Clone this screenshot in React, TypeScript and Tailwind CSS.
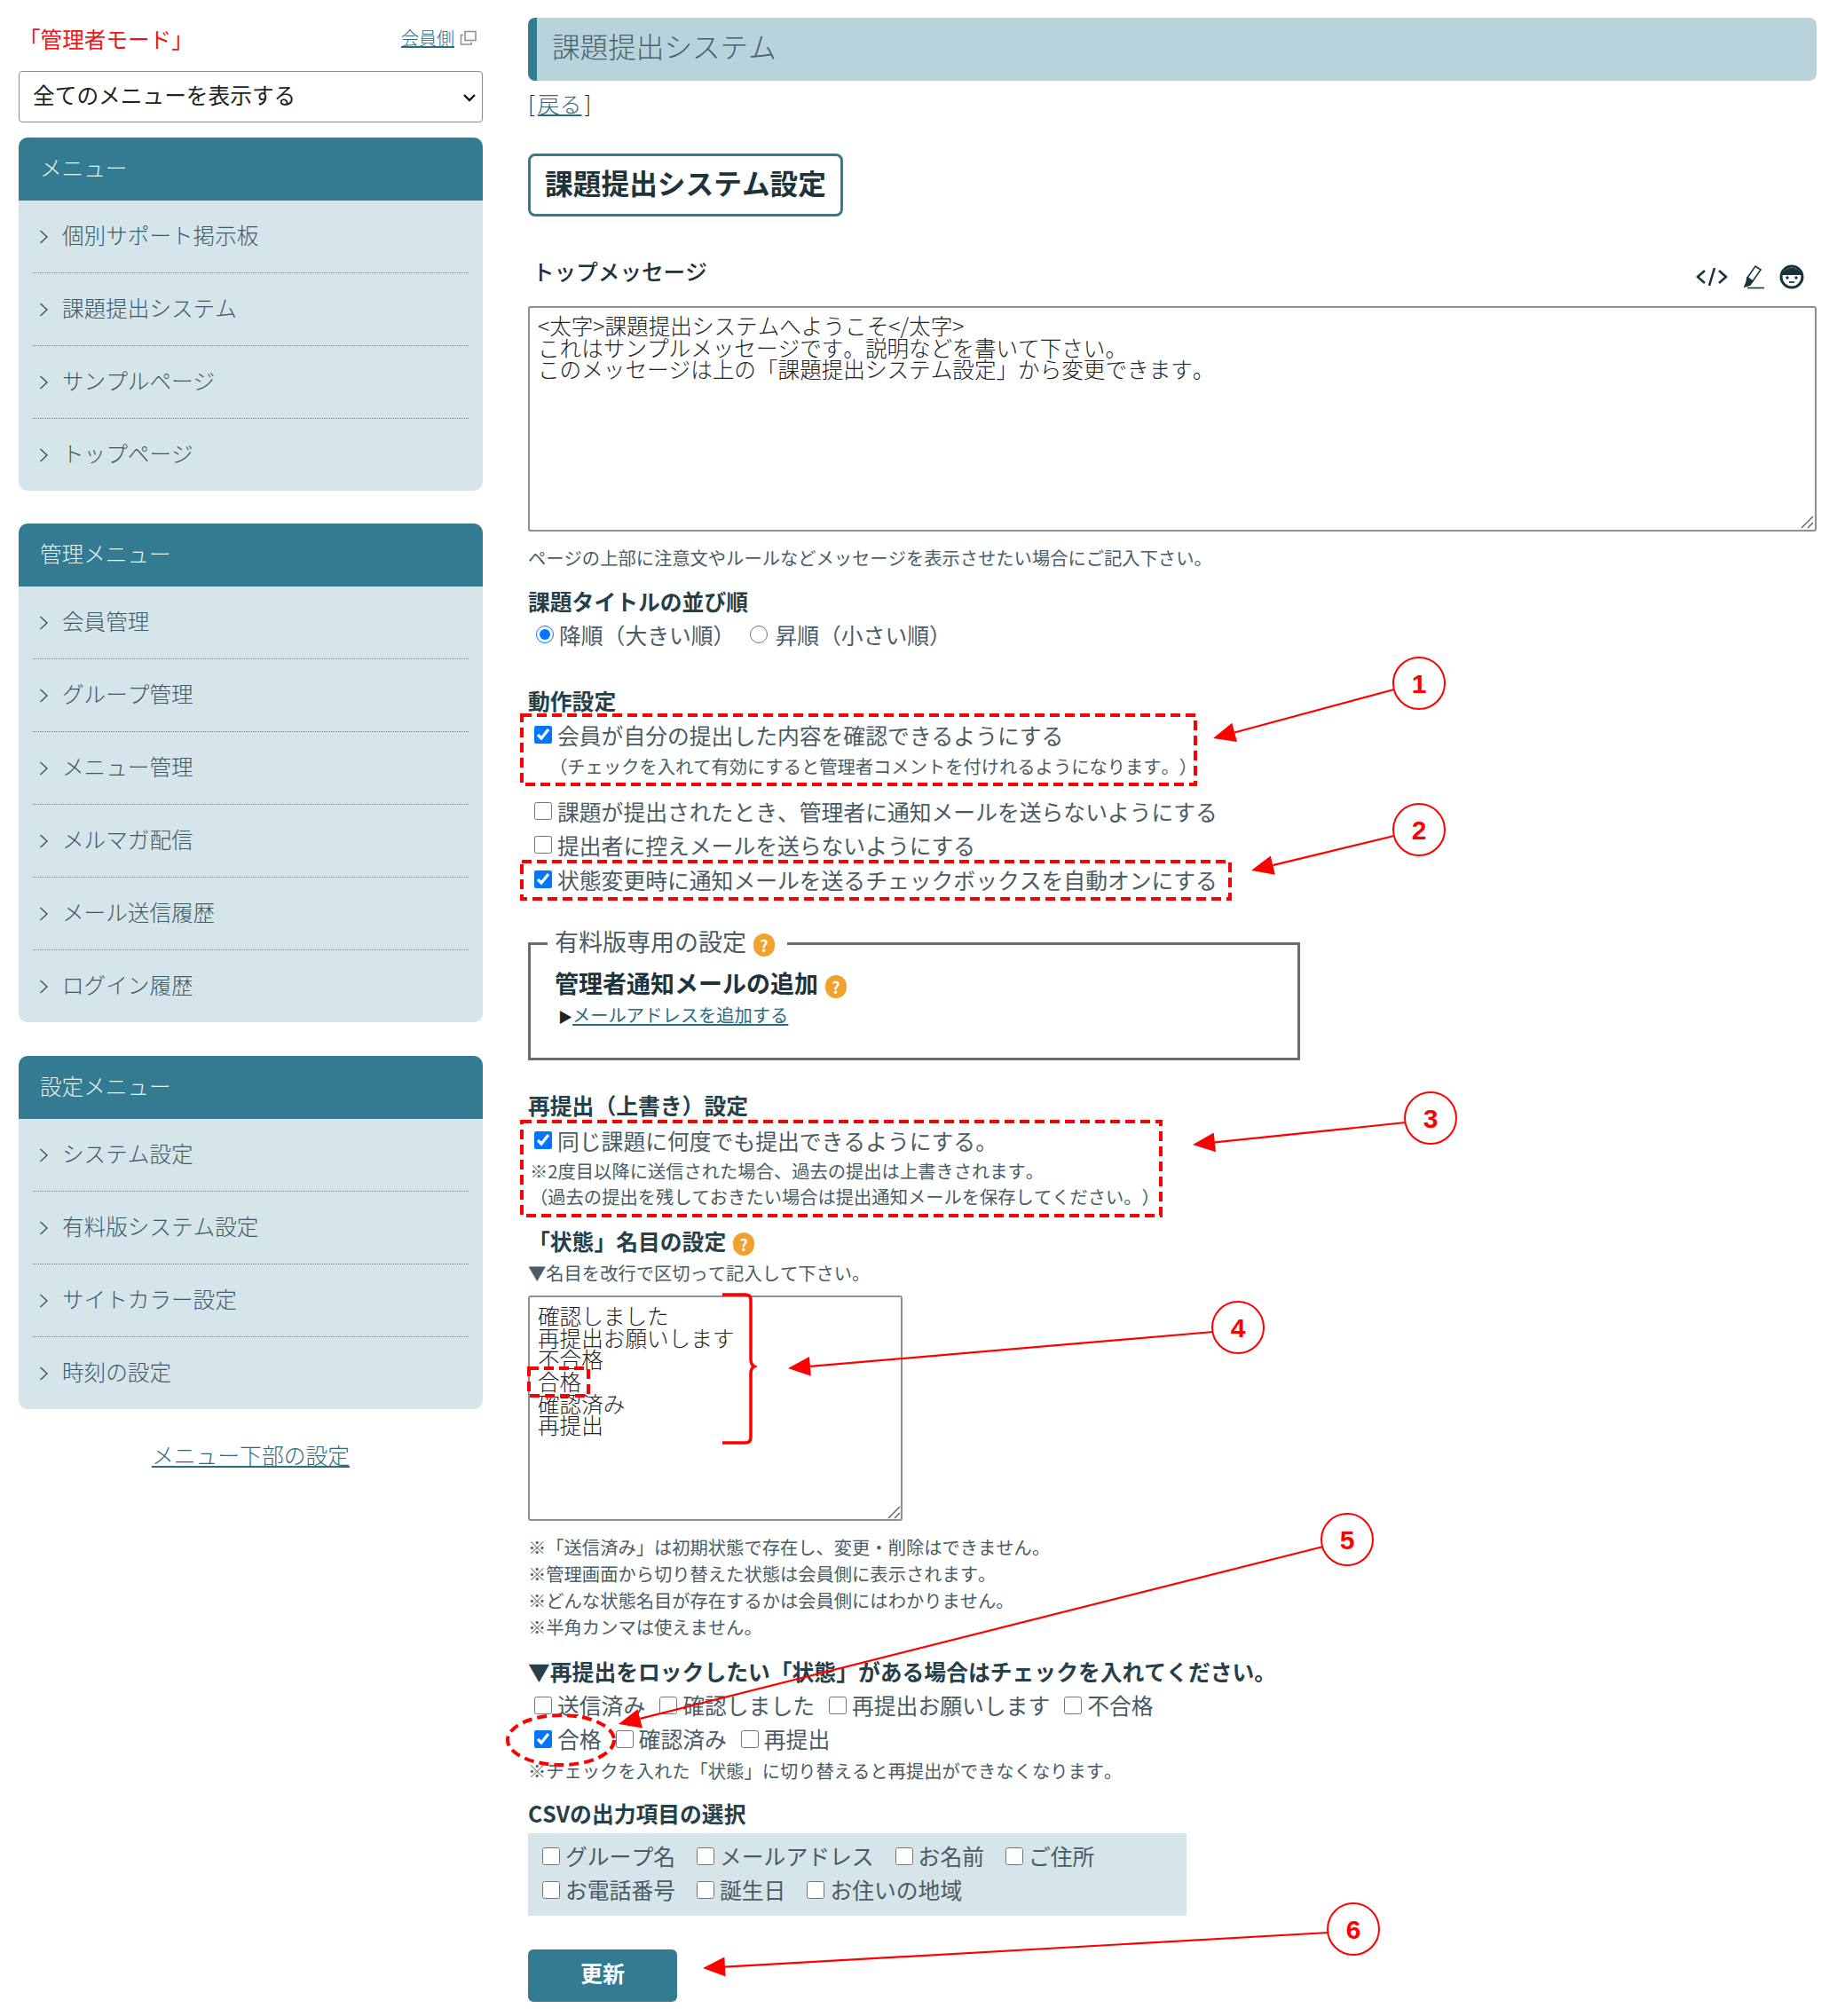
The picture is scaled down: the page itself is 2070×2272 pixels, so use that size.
const jp = '"Noto Sans CJK JP", "Noto Sans", sans-serif';

const menus = [
  { title: "メニュー", items: ["個別サポート掲示板", "課題提出システム", "サンプルページ", "トップページ"] },
  { title: "管理メニュー", items: ["会員管理", "グループ管理", "メニュー管理", "メルマガ配信", "メール送信履歴", "ログイン履歴"] },
  { title: "設定メニュー", items: ["システム設定", "有料版システム設定", "サイトカラー設定", "時刻の設定"] },
];

function MenuBox({ title, items }: { title: string; items: string[] }) {
  return (
    <div className="mb-[37px] even:mb-[38px]">
      <div className="h-[71px] rounded-t-[10px] bg-[#337b90] pl-[24px] text-[24.6px] font-light leading-[66px] text-[#e8f2f5]">{title}</div>
      <ul className="rounded-b-[10px] bg-[#d6e5ea] px-[16px]">
        {items.map((item, i) => (
          <li
            key={item}
            className={
              i < items.length - 1
                ? "flex h-[82px] items-center border-b border-dotted border-[#4f8a9c] pl-[7px] text-[#3b5b67]"
                : "flex h-[81px] items-center pl-[7px] text-[#3b5b67]"
            }
          >
            <svg width="11" height="18" viewBox="0 0 11 18" className="mr-[15px]">
              <path d="M1.5 2 L9 9 L1.5 16" fill="none" stroke="#3b5b67" strokeWidth="1.5" />
            </svg>
            <span className="pb-[5px] text-[24.6px] font-light">{item}</span>
          </li>
        ))}
      </ul>
    </div>
  );
}

function Help() {
  return (
    <span className="ml-[8px] inline-flex h-[26px] w-[24px] items-center justify-center rounded-full bg-[#f0a22e] align-middle text-[18px] font-bold leading-none text-white">
      ?
    </span>
  );
}

function Check({ label, checked = false, className = "" }: { label: string; checked?: boolean; className?: string }) {
  return (
    <label className={"inline-flex items-center pb-[3px] " + className}>
      <input type="checkbox" defaultChecked={checked} className="mr-[6px] h-[20px] w-[20px] shrink-0" />
      <span>{label}</span>
    </label>
  );
}

function Heading({ children, className = "" }: { children: React.ReactNode; className?: string }) {
  return <div className={"text-[24.8px] font-bold leading-[34px] text-[#26404a] " + className}>{children}</div>;
}

function Note({ children, className = "" }: { children: React.ReactNode; className?: string }) {
  return <div className={"text-[20.3px] leading-[30px] " + className}>{children}</div>;
}

function Arrow({ x1, y1, x2, y2 }: { x1: number; y1: number; x2: number; y2: number }) {
  // 矢じりは先端から線の向きに逆算して描く
  const len = Math.hypot(x2 - x1, y2 - y1);
  const ux = (x2 - x1) / len;
  const uy = (y2 - y1) / len;
  const bx = x2 - ux * 25;
  const by = y2 - uy * 25;
  const pts = `${x2},${y2} ${bx - uy * 11},${by + ux * 11} ${bx + uy * 11},${by - ux * 11}`;
  return (
    <g>
      <line x1={x1} y1={y1} x2={bx} y2={by} stroke="#f00" strokeWidth="2.2" />
      <polygon points={pts} fill="#f00" />
    </g>
  );
}

function Badge({ cx, cy, n }: { cx: number; cy: number; n: number }) {
  return (
    <g>
      <circle cx={cx} cy={cy} r="29" fill="#fff" stroke="#f00" strokeWidth="2" />
      <text x={cx} y={cy + 11} textAnchor="middle" fontSize="30" fontWeight="700" fill="#f00" fontFamily='"Liberation Sans", sans-serif'>
        {n}
      </text>
    </g>
  );
}

const dashed = { fill: "none", stroke: "#f00", strokeWidth: 4, strokeDasharray: "11 6" };

function Annotations() {
  return (
    <svg className="pointer-events-none absolute left-0 top-0" width="2070" height="2272" viewBox="0 0 2070 2272">
      {/* textarea resize handles */}
      <path d="M2030 595 L2043 582 M2037 595 L2043 589" stroke="#666" strokeWidth="1.5" />
      <path d="M1001 1711 L1014 1698 M1008 1711 L1014 1705" stroke="#666" strokeWidth="1.5" />
      <rect x="588" y="806" width="759" height="78" {...dashed} />
      <rect x="588" y="971" width="798" height="42" {...dashed} />
      <rect x="588" y="1264" width="720" height="106" {...dashed} />
      <rect x="596" y="1542" width="67" height="31" {...dashed} />
      <ellipse cx="632" cy="1961" rx="60" ry="28" {...dashed} />
      <path
        d="M814 1459 H840 Q846 1459 846 1465 V1532 Q846 1538 850 1540 Q846 1542 846 1548 V1620 Q846 1626 840 1626 H814"
        fill="none"
        stroke="#f00"
        strokeWidth="3.5"
      />
      <Arrow x1={1571} y1={777} x2={1367} y2={832} />
      <Arrow x1={1571} y1={942} x2={1410} y2={981} />
      <Arrow x1={1584} y1={1265} x2={1344} y2={1290} />
      <Arrow x1={1367} y1={1501} x2={888} y2={1542} />
      <Arrow x1={1491} y1={1743} x2={697} y2={1943} />
      <Arrow x1={1497} y1={2178} x2={792} y2={2218} />
      <Badge cx={1599} cy={770} n={1} />
      <Badge cx={1599} cy={935} n={2} />
      <Badge cx={1612} cy={1260} n={3} />
      <Badge cx={1395} cy={1496} n={4} />
      <Badge cx={1518} cy={1735} n={5} />
      <Badge cx={1525} cy={2174} n={6} />
    </svg>
  );
}

function Toolbar() {
  return (
    <div className="flex items-center gap-[14px] pr-[14px] pt-[14px]">
      <svg width="36" height="22" viewBox="0 0 36 22" fill="none" stroke="#17343e" strokeWidth="2.6" className="mr-[2px]">
        <path d="M10 4 L2 11 L10 18" />
        <path d="M26 4 L34 11 L26 18" />
        <path d="M21 1 L15 21" />
      </svg>
      <svg width="26" height="28" viewBox="0 0 26 28" fill="none" stroke="#17343e" strokeWidth="1.6" className="mr-[2px]">
        <path d="M15 2 L21 6 L12 19 L6 15 Z" />
        <path d="M6 15 L12 19 L9 23 L3 25 L5 20 Z" fill="#17343e" />
        <path d="M6 26.5 H25" />
      </svg>
      <svg width="28" height="28" viewBox="0 0 28 28">
        <circle cx="14" cy="14" r="12" fill="#fff" stroke="#17343e" strokeWidth="3" />
        <path d="M3 12 A11.5 11.5 0 0 1 25 12 Z" fill="#17343e" />
        <circle cx="9" cy="15" r="1.7" fill="#17343e" />
        <circle cx="19" cy="15" r="1.7" fill="#17343e" />
        <path d="M11 20 H17" stroke="#17343e" strokeWidth="1.8" />
      </svg>
    </div>
  );
}

export default function App() {
  return (
    <div
      className="relative flex h-[2272px] w-[2070px] bg-white text-[24.8px] text-[#4a5c64] [font-kerning:none] [text-spacing-trim:space-all]"
      style={{ fontFamily: jp }}
    >
      <aside className="ml-[21px] w-[523px] shrink-0 pt-[26px]">
        <div className="flex h-[34px] items-center justify-between pr-[7px]">
          <span className="text-[24.6px] text-[#f01414]">「管理者モード」</span>
          <span className="flex items-center text-[20px] font-light text-[#2e6a7e]">
            <span className="underline">会員側</span>
            <svg width="19" height="18" viewBox="0 0 19 18" fill="none" stroke="#8a9296" strokeWidth="1.6" className="ml-[6px]">
              <rect x="6" y="1.5" width="12" height="10" />
              <path d="M4 5.5 H1.5 V16 H13 V13.5" />
            </svg>
          </span>
        </div>
        <div className="relative mb-[17px] mt-[20px] h-[58px]">
          <select className="h-full w-full appearance-none rounded-[4px] border border-[#8b8b8b] bg-white pb-[4px] pl-[15px] pr-[8px] text-[24.7px] text-[#222]">
            <option>全てのメニューを表示する</option>
          </select>
          <svg width="16" height="10" viewBox="0 0 16 10" className="pointer-events-none absolute right-[7px] top-[25px]">
            <path d="M2 2 L8 8 L14 2" fill="none" stroke="#111" strokeWidth="2.4" />
          </svg>
        </div>
        {menus.map((m) => (
          <MenuBox key={m.title} title={m.title} items={m.items} />
        ))}
        <div className="-mt-[3px] text-center text-[24.8px] font-light leading-[34px] text-[#2e6a7e] underline">メニュー下部の設定</div>
      </aside>

      <main className="ml-[51px] w-[1452px] pt-[20px]">
        <div className="h-[71px] rounded-[8px] border-l-[10px] border-[#337b90] bg-[#b9d3dc] pl-[17px] text-[31.6px] font-light leading-[62px] text-[#44646f]">
          課題提出システム
        </div>
        <div className="mt-[8px] h-[35px] text-[24.8px] font-light leading-[34px] text-[#222]">
          [<span className="mx-[3px] text-[#2e6a7e] underline">戻る</span>]
        </div>
        <div className="mt-[39px] flex h-[71px] w-[355px] items-center justify-center rounded-[8px] border-[3px] border-[#337b90] pb-[5px] text-[31.7px] font-bold text-[#1d343c]">
          課題提出システム設定
        </div>
        <div className="mt-[40px] flex h-[45px] items-start justify-between">
          <div className="pl-[5px] text-[24.6px] font-medium leading-[42px] text-[#1d343c]">トップメッセージ</div>
          <Toolbar />
        </div>
        <textarea
          className="mt-[16px] block h-[254px] w-full resize-none rounded-[3px] border-2 border-[#8f8f8f] px-[9px] py-[7px] text-[24.6px] font-light leading-[24.6px] text-[#222]"
          defaultValue={"<太字>課題提出システムへようこそ</太字>\nこれはサンプルメッセージです。説明などを書いて下さい。\nこのメッセージは上の「課題提出システム設定」から変更できます。"}
        />
        <Note className="mt-[14px]">ページの上部に注意文やルールなどメッセージを表示させたい場合にご記入下さい。</Note>
        <Heading className="mt-[17px]">課題タイトルの並び順</Heading>
        <div className="mt-[4px] flex h-[34px] items-center pl-[9px] leading-[34px]">
          <input type="radio" name="order" defaultChecked className="mr-[6px] h-[20px] w-[20px]" />
          <span>降順（大きい順）</span>
          <input type="radio" name="order" className="ml-[17px] mr-[8px] h-[20px] w-[20px]" />
          <span>昇順（小さい順）</span>
        </div>
        <Heading className="mt-[40px]">動作設定</Heading>
        <div className="mt-[4px] h-[34px] pl-[7px] leading-[34px]">
          <Check label="会員が自分の提出した内容を確認できるようにする" checked />
        </div>
        <Note className="mt-[4px] pl-[24px]">（チェックを入れて有効にすると管理者コメントを付けれるようになります。）</Note>
        <div className="mt-[17px] h-[36px] pl-[7px] leading-[36px]">
          <Check label="課題が提出されたとき、管理者に通知メールを送らないようにする" />
        </div>
        <div className="mt-[2px] h-[36px] pl-[7px] leading-[36px]">
          <Check label="提出者に控えメールを送らないようにする" />
        </div>
        <div className="mt-[3px] h-[36px] pl-[7px] leading-[36px]">
          <Check label="状態変更時に通知メールを送るチェックボックスを自動オンにする" checked />
        </div>
        <fieldset className="mt-[34px] h-[153px] w-[870px] border-[3px] border-[#6b6b6b] pl-[27px]">
          <legend className="-ml-[8px] px-[8px] pb-[4px] text-[27px] leading-[38px]">
            有料版専用の設定
            <Help />
            <span className="inline-block w-[6px]" />
          </legend>
          <div className="mt-[4px] text-[27px] font-bold leading-[40px] text-[#1d343c]">
            管理者通知メールの追加
            <Help />
          </div>
          <div className="pl-[4px] text-[20.3px] leading-[30px] text-[#222]">
            <span className="text-[16px]">▶</span>
            <span className="text-[#2e6a7e] underline">メールアドレスを追加する</span>
          </div>
        </fieldset>
        <Heading className="mt-[33px]">再提出（上書き）設定</Heading>
        <div className="mt-[5px] h-[34px] pl-[7px] leading-[34px]">
          <Check label="同じ課題に何度でも提出できるようにする。" checked />
        </div>
        <Note className="mt-[3px] pl-[2px]">※2度目以降に送信された場合、過去の提出は上書きされます。</Note>
        <div className="pl-[2px] text-[20.3px] leading-[28px]">（過去の提出を残しておきたい場合は提出通知メールを保存してください。）</div>
        <Heading className="mt-[19px]">「状態」名目の設定<Help /></Heading>
        <Note className="mt-[4px]">▼名目を改行で区切って記入して下さい。</Note>
        <textarea
          className="mt-[11px] block h-[254px] w-[422px] resize-none rounded-[3px] border-2 border-[#8f8f8f] px-[9px] py-[8px] text-[24.6px] font-light leading-[24.6px] text-[#222]"
          defaultValue={"確認しました\n再提出お願いします\n不合格\n合格\n確認済み\n再提出"}
        />
        <Note className="mt-[14px]">※「送信済み」は初期状態で存在し、変更・削除はできません。</Note>
        <Note>※管理画面から切り替えた状態は会員側に表示されます。</Note>
        <Note>※どんな状態名目が存在するかは会員側にはわかりません。</Note>
        <Note>※半角カンマは使えません。</Note>
        <Heading className="mt-[18px]">▼再提出をロックしたい「状態」がある場合はチェックを入れてください。</Heading>
        <div className="mt-[4px] flex h-[38px] items-center gap-[16px] pl-[7px]">
          <Check label="送信済み" />
          <Check label="確認しました" />
          <Check label="再提出お願いします" />
          <Check label="不合格" />
        </div>
        <div className="flex h-[38px] items-center gap-[16px] pl-[7px]">
          <Check label="合格" checked />
          <Check label="確認済み" />
          <Check label="再提出" />
        </div>
        <Note>※チェックを入れた「状態」に切り替えると再提出ができなくなります。</Note>
        <Heading className="mt-[16px]">CSVの出力項目の選択</Heading>
        <div className="mt-[6px] h-[93px] w-[742px] bg-[#d6e5ea] py-[8px] pl-[16px]">
          <div className="flex h-[38px] items-center gap-[24px]">
            <Check label="グループ名" />
            <Check label="メールアドレス" />
            <Check label="お名前" />
            <Check label="ご住所" />
          </div>
          <div className="flex h-[38px] items-center gap-[24px]">
            <Check label="お電話番号" />
            <Check label="誕生日" />
            <Check label="お住いの地域" />
          </div>
        </div>
        <button className="mt-[38px] h-[59px] w-[168px] rounded-[6px] bg-[#337b90] pb-[6px] text-[25px] font-bold text-white">更新</button>
      </main>
      <Annotations />
    </div>
  );
}
